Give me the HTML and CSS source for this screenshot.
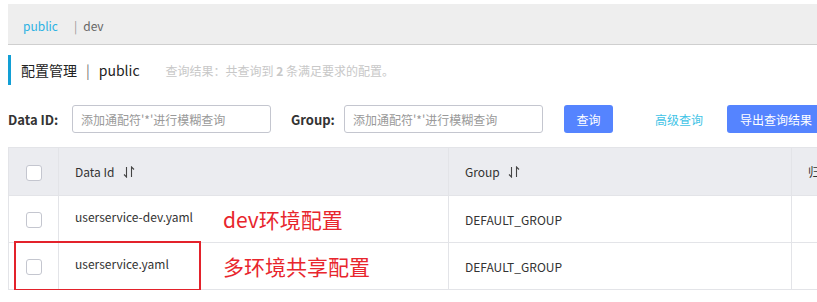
FILE: index.html
```html
<!DOCTYPE html>
<html lang="zh-CN">
<head>
  <meta charset="UTF-8" />
  <meta name="viewport" content="width=device-width, initial-scale=1.0"/>
  <title>配置管理</title>
  <link rel="stylesheet" href="styles.css">
</head>
<body>
  <div class="ns-bar">
    <span class="ns active">public</span>
    <span class="ns-sep">|</span>
    <span class="ns">dev</span>
  </div>

  <div class="title">
    <span class="title-main">配置管理</span>
    <span class="title-sep">|</span>
    <span class="title-ns">public</span>
    <span class="title-hint">查询结果：共查询到 <b>2</b> 条满足要求的配置。</span>
  </div>

  <div class="search">
    <label class="search-label id-label">Data ID:</label>
    <input class="field" type="text" placeholder="添加通配符'*'进行模糊查询">
    <label class="search-label group-label">Group:</label>
    <input class="field" type="text" placeholder="添加通配符'*'进行模糊查询">
    <button class="btn btn-query">查询</button>
    <a class="link-adv" href="#">高级查询</a>
    <button class="btn btn-export">导出查询结果</button>
  </div>

  <div class="table-wrap">
    <table class="config-table">
      <colgroup>
        <col class="col-check">
        <col class="col-id">
        <col class="col-group">
        <col class="col-app">
      </colgroup>
      <thead>
        <tr>
          <th class="cell-check"><span class="checkbox"></span></th>
          <th>Data Id <svg class="sort" viewBox="0 0 12 12"><path d="M3.5 1 V11 L1 8.5 M8.5 11 V1 L11 3.5"/></svg></th>
          <th>Group <svg class="sort" viewBox="0 0 12 12"><path d="M3.5 1 V11 L1 8.5 M8.5 11 V1 L11 3.5"/></svg></th>
          <th>归属应用</th>
        </tr>
      </thead>
      <tbody>
        <tr>
          <td class="cell-check"><span class="checkbox"></span></td>
          <td><span class="data-id">userservice-dev.yaml</span><span class="note">dev环境配置</span></td>
          <td>DEFAULT_GROUP</td>
          <td></td>
        </tr>
        <tr>
          <td class="cell-check"><span class="checkbox"></span></td>
          <td><span class="data-id">userservice.yaml</span><span class="note">多环境共享配置</span></td>
          <td>DEFAULT_GROUP</td>
          <td></td>
        </tr>
      </tbody>
    </table>
    <div class="mark"></div>
  </div>
</body>
</html>
```

FILE: styles.css
```css
html, body {
  overflow: hidden;
}

body {
  margin: 4px 0 0 8px;
  font-family: "Noto Sans CJK SC", "Noto Sans", sans-serif;
  font-size: 12px;
  color: #333;
  background: #fff;
}

.ns-bar {
  display: flex;
  align-items: center;
  box-sizing: border-box;
  height: 41px;
  padding: 3px 0 0 15px;
  background: #eeeeee;
  border-bottom: 1px solid #cfcfcf;
}

.ns {
  color: #666;
}

.ns.active {
  color: #2cb2e3;
}

.ns-sep {
  margin: 0 6px 0 16px;
  color: #999;
}

.title {
  display: flex;
  align-items: center;
  height: 30px;
  margin-top: 10px;
  padding-left: 10px;
  border-left: 3px solid #129fd5;
}

.title-main,
.title-ns {
  font-size: 14px;
  color: #222;
}

.title-sep {
  margin: 0 9px;
  font-size: 14px;
  color: #777;
}

.title-hint {
  margin-left: 26px;
  color: #c8c8c8;
}

.title-hint b {
  font-weight: bold;
}

.search {
  display: flex;
  align-items: center;
  height: 28px;
  margin-top: 20px;
  white-space: nowrap;
}

.search > * {
  flex-shrink: 0;
}

.search-label {
  font-weight: bold;
  font-size: 13px;
  color: #333;
}

.id-label {
  width: 64px;
}

.group-label {
  width: 53px;
  margin-left: 20px;
}

.field {
  box-sizing: border-box;
  width: 199px;
  height: 28px;
  padding: 0 8px;
  border: 1px solid #c4c6cf;
  border-radius: 3px;
  font-family: inherit;
  font-size: 12px;
}

.field::placeholder {
  color: #999;
}

.btn {
  height: 28px;
  padding: 0 12px;
  border: none;
  border-radius: 3px;
  background: #5584ff;
  color: #fff;
  font-family: inherit;
  font-size: 12px;
}

.btn-query {
  width: 49px;
  margin-left: 21px;
  padding: 0;
}

.link-adv {
  width: 48px;
  margin-left: 42px;
  color: #3fc3e6;
  text-decoration: none;
}

.btn-export {
  margin-left: 24px;
  padding: 0 13px;
}

.table-wrap {
  position: relative;
  margin-top: 14px;
  width: 809px;
  overflow: hidden;
}

.config-table {
  border-collapse: collapse;
  table-layout: fixed;
  width: 1000px;
}

.col-check { width: 50px; }
.col-id { width: 390px; }
.col-group { width: 343px; }
.col-app { width: 217px; }

.config-table th,
.config-table td {
  height: 46px;
  padding: 0 16px;
  border: 1px solid #e3e4e8;
  text-align: left;
  font-weight: normal;
  color: #333;
  white-space: nowrap;
}

.config-table th {
  height: 47px;
  background: #ebecf0;
}

.config-table th.cell-check,
.config-table td.cell-check {
  padding: 0;
  text-align: center;
}

.checkbox {
  display: inline-block;
  box-sizing: border-box;
  width: 16px;
  height: 16px;
  border: 1px solid #c4c6cf;
  border-radius: 3px;
  background: #fff;
  vertical-align: middle;
}

.sort {
  width: 12px;
  height: 12px;
  margin-left: 6px;
  vertical-align: -1px;
  fill: none;
  stroke: #444;
  stroke-width: 1.1;
}

.data-id {
  display: inline-block;
  width: 148px;
}

.note {
  font-size: 21px;
  color: #e8262d;
  vertical-align: middle;
}

.mark {
  position: absolute;
  left: 6px;
  top: 94px;
  width: 183px;
  height: 46px;
  border: 2px solid #e3222b;
}
```
